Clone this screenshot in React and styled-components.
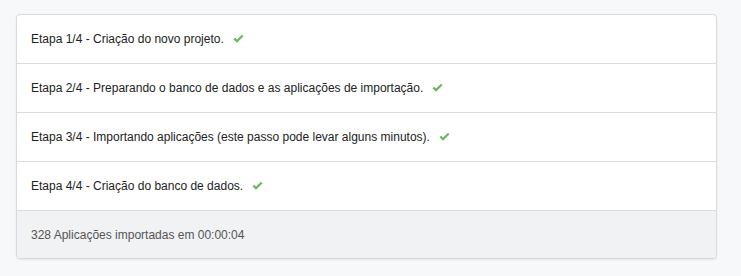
import React from 'react';
import { styled, createGlobalStyle } from 'styled-components';

const Global = createGlobalStyle`
	html, body {
		margin: 0;
		background: #f7f8fa;
		font-family: "Liberation Sans", Arial, sans-serif;
	}
`;

const Page = styled.div`
	padding: 14px 24px 18px 16px;
`;

const Panel = styled.ul`
	list-style: none;
	margin: 0;
	padding: 0;
	background: #fff;
	border: 1px solid #d9dadc;
	border-radius: 4px;
	box-shadow: 0 1px 2px rgba(0, 0, 0, 0.08);
	overflow: hidden;
`;

const Step = styled.li`
	display: flex;
	align-items: center;
	gap: 9px;
	height: 48px;
	padding: 0 14px;
	font-size: 12px;
	color: #222;
	border-bottom: 1px solid #dcdcdc;
`;

const Footer = styled.li`
	display: flex;
	align-items: center;
	height: 47px;
	padding: 0 14px;
	font-size: 12px;
	color: #555;
	background: #f1f2f4;
`;

const Check = () => (
	<svg width="11" height="10" viewBox="0 0 12 10">
		<path d="M0.5 5.2 L2.3 3.5 L4.4 5.6 L9.8 0.4 L11.5 2.1 L4.4 9.1 Z" fill="#6abb5d" />
	</svg>
);

const steps = [
	'Etapa 1/4 - Criação do novo projeto.',
	'Etapa 2/4 - Preparando o banco de dados e as aplicações de importação.',
	'Etapa 3/4 - Importando aplicações (este passo pode levar alguns minutos).',
	'Etapa 4/4 - Criação do banco de dados.',
];

const App = () => {
	return (
		<Page>
			<Global />
			<Panel>
				{steps.map((s) => (
					<Step key={s}>
						<span>{s}</span>
						<Check />
					</Step>
				))}
				<Footer>328 Aplicações importadas em 00:00:04</Footer>
			</Panel>
		</Page>
	);
};

export default App;
